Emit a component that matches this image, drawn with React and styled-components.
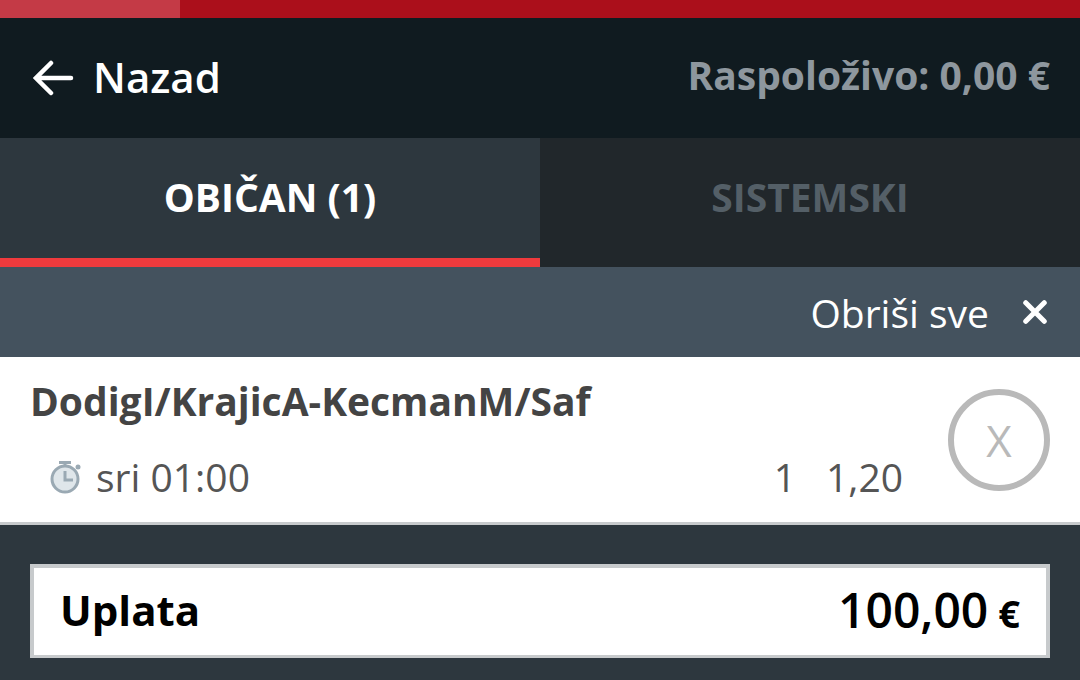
import React from "react";
import styled, { createGlobalStyle } from "styled-components";

const Global = createGlobalStyle`
  html, body { margin: 0; padding: 0; background: #2d373e; }
  * { box-sizing: border-box; }
`;
const Page = styled.div`
  width: 1080px; height: 680px; overflow: hidden; display: flex; flex-direction: column;
  font-family: "Open Sans", sans-serif; background: #2d373e;
`;
const Progress = styled.div`
  height: 18px; background: #ab0f1b; flex: none;
`;
const ProgressFill = styled.div`
  height: 100%; width: 180px; background: #c43a46;
`;
const Header = styled.header`
  height: 120px; flex: none; background: #101b20; display: flex; align-items: center; justify-content: space-between;
  padding: 0 30px 0 33px;
`;
const Back = styled.div`
  display: flex; align-items: center; gap: 19px; color: #fff; font-size: 42px; font-weight: 600; line-height: 56px; padding-bottom: 2px;
`;
const BackIcon = styled.svg`
  margin-top: 2px;
`;
const Balance = styled.div`
  color: #8e979e; font-size: 39px; font-weight: 700; padding-bottom: 8px;
`;
const Tabs = styled.div`
  display: flex; height: 129px; flex: none;
`;
const Tab = styled.div`
  width: 540px; display: flex; align-items: center; justify-content: center;
  font-size: 39px; font-weight: 700; padding-bottom: ${p => p.$active ? 4 : 12}px;
  color: ${p => p.$active ? "#fff" : "#545f67"};
  background: ${p => p.$active ? "#2d373e" : "#21272b"};
  border-bottom: ${p => p.$active ? "9px solid #ef3a3d" : "none"};
`;
const ClearBar = styled.div`
  height: 90px; flex: none; background: #44525e; display: flex; align-items: center; justify-content: flex-end;
  gap: 34px; padding: 0 33px; color: #fff; font-size: 39px;
`;
const Bet = styled.div`
  height: 168px; flex: none; background: #fff; border-bottom: 3px solid #c7cacc; display: flex; align-items: center;
  padding: 0 30px; justify-content: space-between;
`;
const BetMain = styled.div`
  width: 873px; display: flex; flex-direction: column; gap: 25px; padding-top: 6px;
`;
const Match = styled.div`
  color: #444; font-size: 39px; font-weight: 700; line-height: 52px; margin-top: -9px;
`;
const Meta = styled.div`
  display: flex; justify-content: space-between; align-items: center; color: #555; font-size: 39px; line-height: 50px;
`;
const Time = styled.div`
  display: flex; align-items: center; gap: 14px; padding-left: 20px;
`;
const Odds = styled.div`
  display: flex; gap: 30px;
`;
const Remove = styled.div`
  width: 102px; height: 102px; border-radius: 50%; border: 6px solid #b9b9b9; color: #b9b9b9;
  display: flex; align-items: center; justify-content: center; font-size: 44px; line-height: 1;
`;
const Stake = styled.div`
  margin: 39px 30px 0; height: 94px; flex: none; background: #fff; border: 4px solid #c7cacc; border-bottom-width: 3px;
  display: flex; align-items: center; justify-content: space-between; padding: 0 26px 4px; color: #000;
`;
const StakeLabel = styled.div`
  font-size: 42px; font-weight: 700;
`;
const StakeValue = styled.div`
  font-size: 48px; font-weight: 550;
`;
const Euro = styled.span`
  font-size: 38px; font-weight: 700; margin-left: 10px;
`;

export default function App() {
  return (
    <Page>
      <Global />
      <Progress><ProgressFill /></Progress>
      <Header>
        <Back>
          <BackIcon width="41" height="36" viewBox="0 0 41 36" fill="none" stroke="#fff" strokeWidth="4.5" strokeLinecap="round">
            <path d="M38 18H3M18 3 3 18l15 15" />
          </BackIcon>
          Nazad
        </Back>
        <Balance>Raspoloživo: 0,00 €</Balance>
      </Header>
      <Tabs>
        <Tab $active>OBIČAN (1)</Tab>
        <Tab>SISTEMSKI</Tab>
      </Tabs>
      <ClearBar>
        Obriši sve
        <svg width="24" height="24" viewBox="0 0 26 26" stroke="#fff" strokeWidth="5.5" strokeLinecap="round"><path d="M3 3l20 20M23 3 3 23" /></svg>
      </ClearBar>
      <Bet>
        <BetMain>
          <Match>DodigI/KrajicA-KecmanM/Saf</Match>
          <Meta>
            <Time>
              <svg width="32" height="34" viewBox="0 0 32 34" fill="none" stroke="#9aa9b3" strokeWidth="3">
                <circle cx="15" cy="19" r="13" fill="#dfe6ea" />
                <path d="M15 11v9h8M9 2.5h12M15 2.5V6" />
                <circle cx="28" cy="7" r="2.5" fill="#9aa9b3" stroke="none" />
              </svg>
              sri 01:00
            </Time>
            <Odds><span>1</span><span>1,20</span></Odds>
          </Meta>
        </BetMain>
        <Remove>X</Remove>
      </Bet>
      <Stake>
        <StakeLabel>Uplata</StakeLabel>
        <StakeValue>100,00<Euro>€</Euro></StakeValue>
      </Stake>
    </Page>
  );
}
